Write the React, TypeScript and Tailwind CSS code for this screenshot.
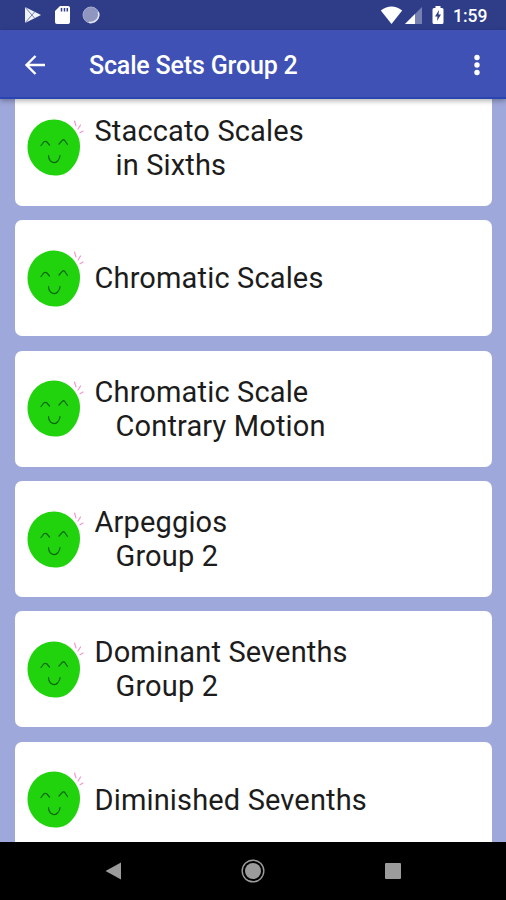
interface ScaleSet {
  title: string;
  subtitle?: string;
}

const SETS: ScaleSet[] = [
  { title: 'Staccato Scales', subtitle: 'in Sixths' },
  { title: 'Chromatic Scales' },
  { title: 'Chromatic Scale', subtitle: 'Contrary Motion' },
  { title: 'Arpeggios', subtitle: 'Group 2' },
  { title: 'Dominant Sevenths', subtitle: 'Group 2' },
  { title: 'Diminished Sevenths' },
];

const StatusBar = () => (
  <div className="flex h-[30px] shrink-0 items-center bg-[#2f3d89] pl-[24px] pr-[18px] text-white">
    <svg width="18" height="20" viewBox="0 0 18 20">
      <path d="M1 2 17 10 1 18Z" fill="#f1f3fa" />
      <path d="M1 2 10.5 13M1 18 10.5 7" stroke="#7780b2" strokeWidth="1" />
    </svg>
    <svg className="ml-[12px]" width="17" height="20" viewBox="0 0 17 20">
      <path d="M6 1H14Q16 1 16 3V17Q16 19 14 19H3Q1 19 1 17V6Z" fill="#fff" />
      <path d="M7.5 3V6.5M10.5 3V6.500M13.300 3V6.500" stroke="#2f3d89" strokeWidth="1.500" />
    </svg>
    <svg className="ml-[11px]" width="20" height="20" viewBox="0 0 20 20">
      <circle cx="9" cy="10" r="8" fill="#8f96c0" stroke="#a5abcd" />
      <path d="M16.300 7A8 8 0 0 1 7 17.300" fill="none" stroke="#e3e6f2" strokeWidth="1.500" />
    </svg>
    <div className="grow" />
    <svg width="23" height="20" viewBox="0 0 23 20">
      <path d="M.8 5.500Q11.500-2.500 22.200 5.500L11.500 19Z" fill="#fff" />
    </svg>
    <svg className="ml-[2px]" width="18" height="20" viewBox="0 0 18 20">
      <path d="M17 2V19H0Z" fill="#7780b2" />
      <path d="M10 9V19H0Z" fill="#fff" />
    </svg>
    <svg className="ml-[9px]" width="12" height="20" viewBox="0 0 12 20">
      <path d="M3.500 1H8.500V3H10Q11.500 3 11.500 4.500V17.500Q11.500 19 10 19H2Q.5 19 .5 17.500V4.500Q.5 3 2 3H3.500Z" fill="#fff" />
      <path d="M7 5 3 11.500H5.500L5 16 9 9.500H6.500Z" fill="#2f3d89" />
    </svg>
    <span className="ml-[9px] mt-[3px] w-[35px] whitespace-nowrap text-[17.5px] font-medium leading-none">1:59</span>
  </div>
);

const Toolbar = () => (
  <header className="z-10 flex h-[69px] shrink-0 items-center border-b-2 border-[#2a44b0] bg-[#3f51b5] pl-[24px] pr-[24px] text-white shadow-[0_2px_5px_rgba(0,0,0,0.3)]">
    <svg className="mt-[2px]" width="22" height="22" viewBox="0 0 22 22" fill="none" stroke="#fff" strokeWidth="2.400">
      <path d="M21 11H3M11.500 2 2.500 11 11.500 20" />
    </svg>
    <h1 className="ml-[43px] mt-[4px] grow whitespace-nowrap text-[25px] font-medium leading-none tracking-[-0.17px]">
      Scale Sets Group 2
    </h1>
    <svg className="mt-[2px]" width="10" height="24" viewBox="0 0 10 24" fill="#fff">
      <circle cx="5" cy="4.500" r="2.700" />
      <circle cx="5" cy="12" r="2.700" />
      <circle cx="5" cy="19.500" r="2.700" />
    </svg>
  </header>
);

const Smiley = () => (
  <svg className="mb-px ml-[12px] shrink-0" width="60" height="64" viewBox="0 0 60 64" fill="none" strokeLinecap="round">
    <path
      d="M27 4.500C41 4.500 53 17 53 31C53 39 50 48 44 54C39 59 34 60.500 28 60.500C13 60.500 .5 48 .5 32C.5 17 12 4.500 27 4.500Z"
      fill="#20d30d"
    />
    <g stroke="#0c6810" strokeWidth="1.200" strokeLinejoin="round">
      <path d="M14 30.500 17 26.700Q18.500 25.800 20 27L22.500 30" />
      <path d="M32 29 35.500 25.200Q36.500 24.300 37.500 25.200L40.500 29.500" />
      <path d="M21.500 40.500Q21.500 44 23.500 46Q27.500 49.500 31 45.500Q33 43 33 40.500" />
    </g>
    <g stroke="#f29acb" strokeWidth="1.200">
      <path d="M47.500 6 49 11" />
      <path d="M53.500 10 51 14" />
      <path d="M56 16 53 17.800" />
    </g>
  </svg>
);

const ScaleCard = ({ title, subtitle }: ScaleSet) => (
  <li className="flex h-[116px] shrink-0 items-center rounded-[7px] bg-white">
    <Smiley />
    <div className="ml-[7.5px] whitespace-nowrap text-[29px] leading-[34px] tracking-[0.15px] text-[#1c1c1c]">
      <p>{title}</p>
      {subtitle && <p className="pl-[21px]">{subtitle}</p>}
    </div>
  </li>
);

const NavBar = () => (
  <nav className="flex h-[58px] shrink-0 items-center justify-between bg-black pl-[105px] pr-[105px]">
    <svg width="17" height="20" viewBox="0 0 17 20">
      <path d="M16 1.500V18.500L.5 10Z" fill="#9b9b9b" />
    </svg>
    <svg className="-ml-px" width="24" height="24" viewBox="0 0 24 24">
      <circle cx="12" cy="12" r="10.800" fill="none" stroke="#9b9b9b" strokeWidth="1.400" />
      <circle cx="12" cy="12" r="8" fill="#9b9b9b" />
    </svg>
    <div className="size-[16px] rounded-[1px] bg-[#9b9b9b]" />
  </nav>
);

export default function App() {
  return (
    <div className="flex h-[900px] w-[506px] flex-col overflow-hidden bg-[#9fa8da] font-['Roboto',sans-serif]">
      <StatusBar />
      <Toolbar />
      <main className="h-[743px] shrink-0 overflow-hidden pl-[15px] pr-[14px]">
        <ul className="-mt-[9.1px] flex flex-col gap-[14.4px]">
          {SETS.map((set) => (
            <ScaleCard key={`${set.title}-${set.subtitle}`} {...set} />
          ))}
        </ul>
      </main>
      <NavBar />
    </div>
  );
}
